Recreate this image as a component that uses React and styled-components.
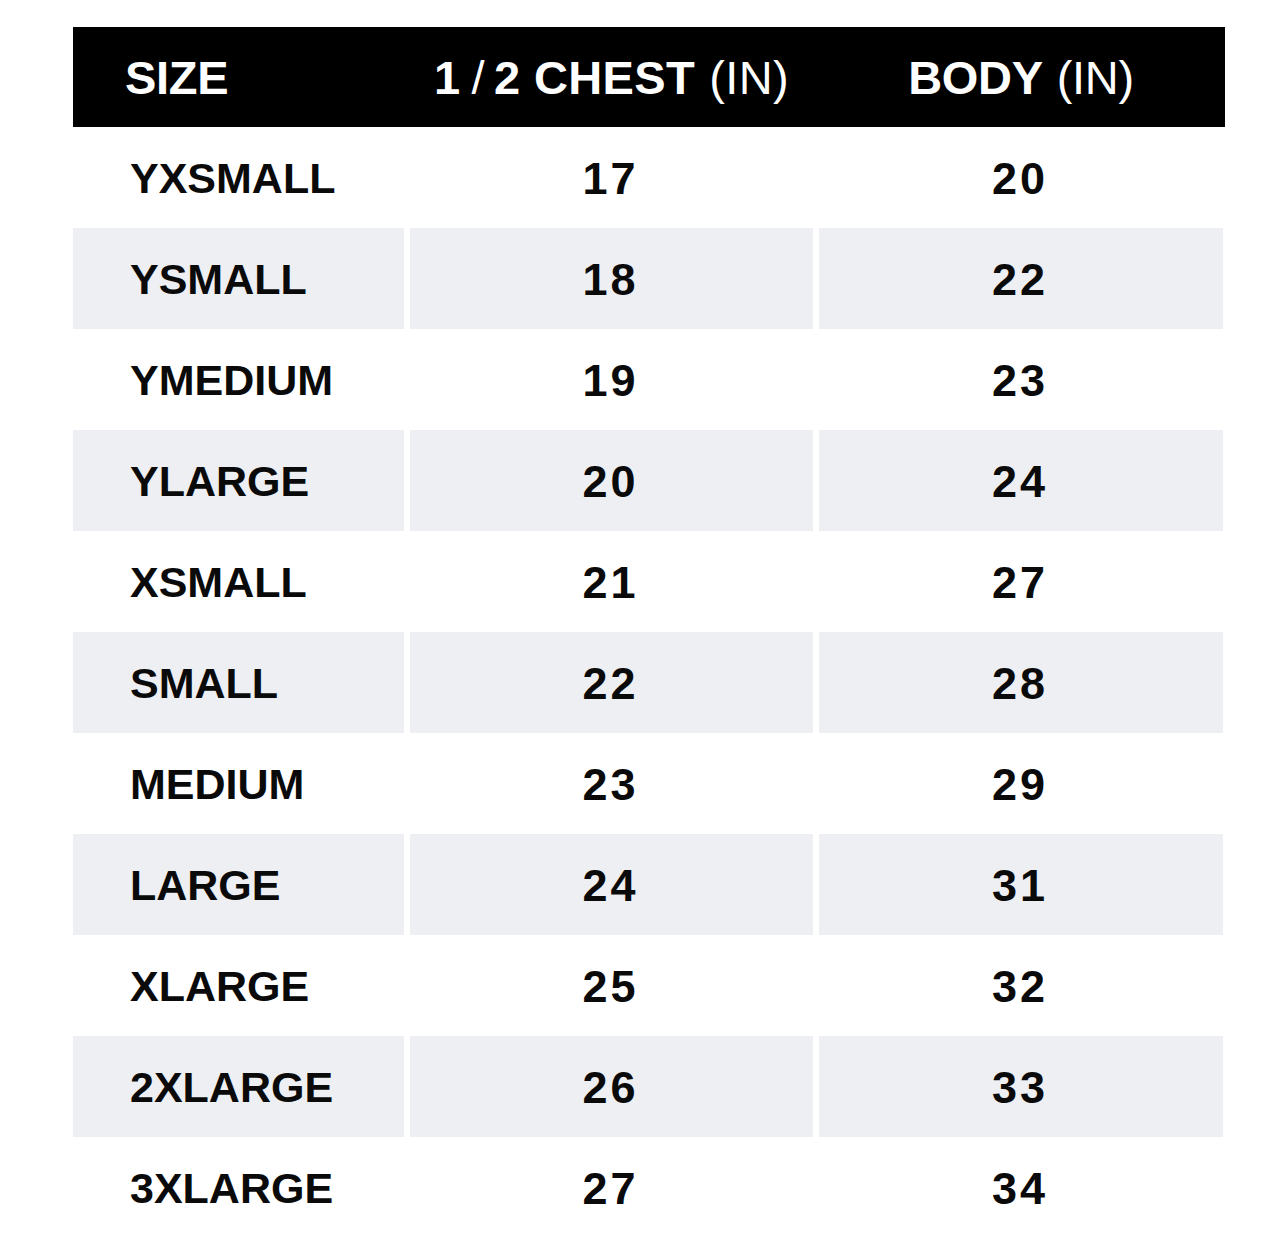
import React from "react";
import styled, { createGlobalStyle } from "styled-components";

const GlobalStyle = createGlobalStyle`
  html, body {
    margin: 0;
    padding: 0;
    background: #fff;
  }
  body {
    font-family: "Liberation Sans", Arial, sans-serif;
    color: #000;
  }
`;

const Page = styled.div`
  width: 1285px;
  min-height: 1252px;
  padding: 27px 0 0 73px;
  box-sizing: border-box;
`;

const Chart = styled.div`
  width: 1152px;
`;

const Head = styled.div`
  display: grid;
  grid-template-columns: 331px 403px 404px;
  column-gap: 6px;
  height: 100px;
  background: #000;
  color: #fff;
`;

const Th = styled.div`
  display: flex;
  align-items: center;
  justify-content: ${(p) => (p.left ? "flex-start" : "center")};
  padding-left: ${(p) => (p.left ? "52px" : "0")};
  font-size: 47px;
  font-weight: 700;
  letter-spacing: ${(p) => (p.wide ? "0.4px" : "-0.3px")};
  white-space: nowrap;
`;

const Slash = styled.span`
  font-weight: 400;
  margin: 0 9px 0 11px;
`;

const Unit = styled.span`
  font-weight: 400;
  margin-left: 14px;
`;

const Row = styled.div`
  display: grid;
  grid-template-columns: 331px 403px 404px;
  column-gap: 6px;
  height: 101px;
`;

const Td = styled.div`
  display: flex;
  align-items: center;
  justify-content: ${(p) => (p.left ? "flex-start" : "center")};
  padding-left: ${(p) => (p.left ? "57px" : "0")};
  padding-right: ${(p) => (p.left ? "0" : "2px")};
  padding-top: 2px;
  box-sizing: border-box;
  background: ${(p) => (p.shade ? "#eeeff3" : "#fff")};
  font-size: ${(p) => (p.left ? "43px" : "45px")};
  letter-spacing: ${(p) => (p.left ? "0" : "3px")};
  font-weight: 700;
  color: #0a0a0a;
`;

const sizes = [
  ["YXSMALL", 17, 20],
  ["YSMALL", 18, 22],
  ["YMEDIUM", 19, 23],
  ["YLARGE", 20, 24],
  ["XSMALL", 21, 27],
  ["SMALL", 22, 28],
  ["MEDIUM", 23, 29],
  ["LARGE", 24, 31],
  ["XLARGE", 25, 32],
  ["2XLARGE", 26, 33],
  ["3XLARGE", 27, 34],
];

export default function App() {
  return (
    <Page>
      <GlobalStyle />
      <Chart>
        <Head>
          <Th left>SIZE</Th>
          <Th wide>
            1<Slash>/</Slash>2 CHEST<Unit>(IN)</Unit>
          </Th>
          <Th>
            BODY<Unit>(IN)</Unit>
          </Th>
        </Head>
        {sizes.map(([name, chest, body], i) => (
          <Row key={name}>
            <Td left shade={i % 2 === 1}>{name}</Td>
            <Td shade={i % 2 === 1}>{chest}</Td>
            <Td shade={i % 2 === 1}>{body}</Td>
          </Row>
        ))}
      </Chart>
    </Page>
  );
}
